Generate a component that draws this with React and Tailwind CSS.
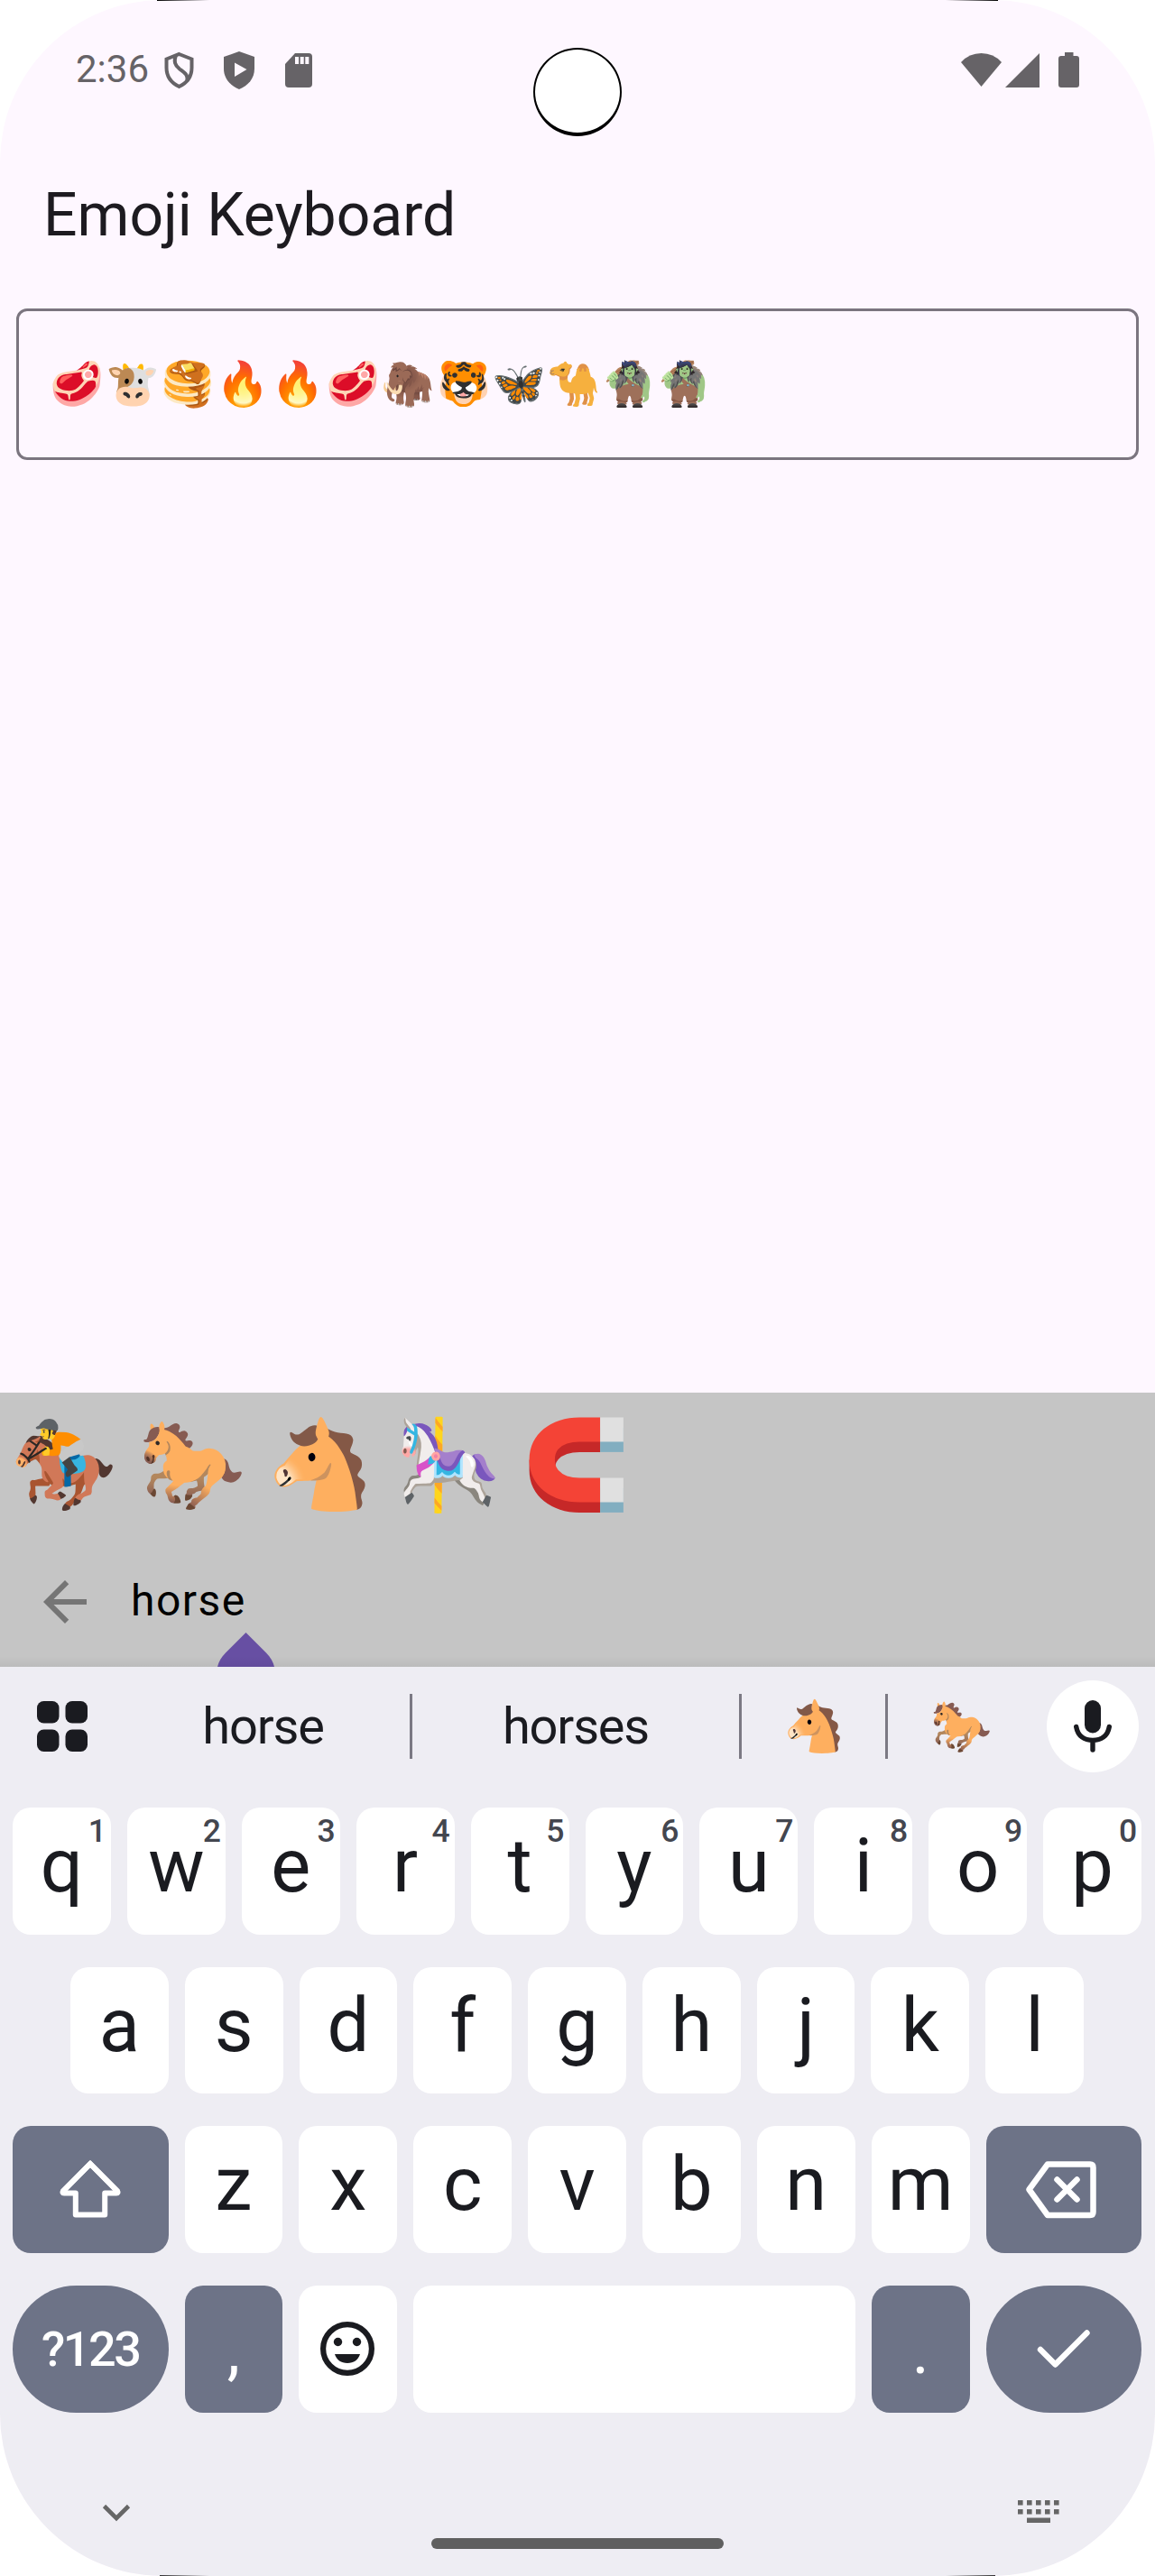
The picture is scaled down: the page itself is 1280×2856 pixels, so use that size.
const textEmojis = ['🥩', '🐮', '🥞', '🔥', '🔥', '🥩', '🦣', '🐯', '🦋', '🐪', '🧌', '🧌'];
const results = ['🏇', '🐎', '🐴', '🎠', '🧲'];
const font = "font-[Roboto,'Noto_Color_Emoji',sans-serif]";

function StatusBar() {
  return (
    <div className="h-[170px] flex items-start text-[#666367]">
      <span className="ml-[84px] mt-[53px] w-[98px] text-[42px] leading-[48px]">2:36</span>
      <svg className="mt-[57px] h-[42px] w-[33px]" viewBox="0 0 33 42" fill="none" stroke="currentColor" strokeWidth="4">
        <path d="M16.500 3 L30.500 8.500 V18 C30.500 28 25 35 16.500 39 C8 35 2.500 28 2.500 18 V8.500 Z" />
        <path d="M13 4 C10.500 11 11.500 15 17 19.500 C23 24 26.500 26 25.500 33" />
      </svg>
      <svg className="ml-[33px] mt-[57px] h-[42px] w-[34px]" viewBox="0 0 34 42">
        <path fill="currentColor" d="M17 0 L34 6 V19 C34 30 27 38 17 42 C7 38 0 30 0 19 V6 Z" />
        <path fill="#fef7ff" d="M12 12.500 L25.500 20 L12 28 Z" />
      </svg>
      <svg className="ml-[34px] mt-[59px] h-[38px] w-[30px]" viewBox="0 0 30 38">
        <path fill="currentColor" d="M11 0 H26 Q30 0 30 4 V34 Q30 38 26 38 H4 Q0 38 0 34 V12 Z" />
        <path fill="#fef7ff" d="M11 4 h4 v8 h-4z M16.700 4 h4 v8 h-4z M22.300 4 h4 v8 h-4z" />
      </svg>
      <div className="ml-[245px] mt-[53px] h-[98px] w-[98px] rounded-full border-[2.5px] border-b-4 border-black bg-white" />
      <svg className="ml-[376px] mt-[58px] h-[39px] w-[45px]" viewBox="0 0 45 39" fill="currentColor">
        <path d="M22.500 38 L0 11 Q9 1 22.500 1 T45 11 Z" />
      </svg>
      <svg className="ml-[4px] mt-[58px] h-[39px] w-[38px]" viewBox="0 0 38 39" fill="currentColor">
        <path d="M38 1 V39 H0 Z" />
      </svg>
      <svg className="ml-[21px] mt-[58px] h-[39px] w-[23px]" viewBox="0 0 23 39" fill="currentColor">
        <path d="M7 0 H16.500 V4 H20 Q23 4 23 7 V36 Q23 39 20 39 H3 Q0 39 0 36 V7 Q0 4 3 4 H7 Z" />
      </svg>
    </div>
  );
}

function Key({ label, hint }) {
  return (
    <div className="relative flex h-full flex-1 justify-center rounded-[20px] bg-white text-[83px] leading-[96px] text-[#1a1b20]">
      <span className="mt-[17px]">{label}</span>
      {hint && <span className="absolute right-[5px] top-[6px] text-[35.5px] font-medium leading-[40px] text-[#43464f]">{hint}</span>}
    </div>
  );
}

const darkKey = 'flex h-full items-center justify-center bg-[#6d7387] text-white';

function Keyboard() {
  return (
    <div className="h-[1008px] bg-[#eeedf3] text-[#1a1b20]">
      <div className="flex h-[132px] items-center">
        <svg className="ml-[41px] h-[56px] w-[56px]" viewBox="0 0 56 56" fill="currentColor">
          <rect width="24.500" height="24.500" rx="7.500" />
          <rect x="31.500" width="24.500" height="24.500" rx="7.500" />
          <rect y="31.500" width="24.500" height="24.500" rx="7.500" />
          <rect x="31.500" y="31.500" width="24.500" height="24.500" rx="7.500" />
        </svg>
        <span className="ml-[30px] w-[327px] pl-[2px] text-center text-[56px] leading-[64px] tracking-[-1.2px]">horse</span>
        <i className="h-[72px] w-[3px] bg-[#7b7983]" />
        <span className="w-[362px] text-center text-[56px] leading-[64px] tracking-[-1.2px]">horses</span>
        <i className="h-[72px] w-[3px] bg-[#7b7983]" />
        <span className="flex w-[159px] justify-center pl-[3px] text-[55px] leading-[64px]">🐴</span>
        <i className="h-[72px] w-[3px] bg-[#7b7983]" />
        <span className="flex w-[164px] justify-center text-[55px] leading-[64px]">🐎</span>
        <div className="ml-[12px] flex h-[102px] w-[102px] items-center justify-center rounded-full bg-white">
          <svg className="h-[58px] w-[42px]" viewBox="0 0 42 58">
            <rect x="12" y="0" width="18" height="36.500" rx="9" fill="currentColor" />
            <path d="M2.700 29.500 C4.500 40 12 44.500 21 44.500 C30 44.500 37.500 40 39.300 29.500 M21 45 V55" fill="none" stroke="currentColor" strokeWidth="5.400" strokeLinecap="round" />
          </svg>
        </div>
      </div>
      <div className="mt-[24px] flex flex-col gap-[36px] pl-[14px] pr-[15px]">
        <div className="flex h-[140.7px] gap-[18px]">
          {[...'qwertyuiop'].map((k, i) => <Key key={k} label={k} hint={String((i + 1) % 10)} />)}
        </div>
        <div className="flex h-[140.7px] gap-[18px] px-[64px]">
          {[...'asdfghjkl'].map((k) => <Key key={k} label={k} />)}
        </div>
        <div className="flex h-[140.7px] gap-[18px]">
          <div className={`${darkKey} w-[172.5px] rounded-[20px]`}>
            <svg className="h-[72px] w-[72px]" viewBox="0 0 72 72" fill="none" stroke="currentColor" strokeWidth="6">
              <path strokeLinejoin="miter" d="M5.500 38 L36 7 L66.500 38" />
              <path strokeLinejoin="round" d="M36 7 L66 37 Q67.500 39.500 65 39.500 H52.200 V63.500 H19.800 V39.500 H7 Q4.500 39.500 6 37 Z" />
            </svg>
          </div>
          {[...'zxcvbnm'].map((k) => <Key key={k} label={k} />)}
          <div className={`${darkKey} w-[172.5px] rounded-[20px]`}>
            <svg className="mr-[5px] h-[66px] w-[78px]" viewBox="0 0 78 66" fill="none" stroke="currentColor" strokeWidth="6.500" strokeLinejoin="round" strokeLinecap="round">
              <path d="M3.500 32.500 L24 4.500 H71 Q74.500 4.500 74.500 8 V57.500 Q74.500 61 71 61 H24 Z" />
              <path d="M34.500 21.500 L56.500 43.500 M56.500 21.500 L34.500 43.500" />
            </svg>
          </div>
        </div>
        <div className="flex h-[140.7px] gap-[18px]">
          <div className={`${darkKey} w-[172.5px] rounded-full text-[54px] font-medium leading-[64px] tracking-[-2.5px]`}><span className="mt-px">?123</span></div>
          <div className={`${darkKey} w-[108.5px] rounded-[20px] text-[72px] leading-[84px]`}><span className="mt-[6px]">,</span></div>
          <div className="flex w-[108.5px] items-center justify-center rounded-[20px] bg-white">
            <svg className="h-[60px] w-[60px]" viewBox="0 0 60 60" fill="currentColor">
              <circle cx="30" cy="30" r="26.900" fill="none" stroke="currentColor" strokeWidth="6.200" />
              <circle cx="19.500" cy="22.500" r="4.700" />
              <circle cx="40.500" cy="22.500" r="4.700" />
              <path d="M16 36 H44 C42 42.500 37 46 30 46 S18 42.500 16 36 Z" />
            </svg>
          </div>
          <div className="flex-1 rounded-[20px] bg-white" />
          <div className={`${darkKey} w-[108.5px] rounded-[20px] text-[72px] leading-[84px]`}><span className="mt-[6px]">.</span></div>
          <div className={`${darkKey} w-[172.5px] rounded-full`}>
            <svg className="h-[60px] w-[60px]" viewBox="0 0 60 60" fill="none" stroke="currentColor" strokeWidth="6.400" strokeLinecap="round" strokeLinejoin="round">
              <path d="M4 31 L20.500 47.500 L55.500 12.500" />
            </svg>
          </div>
        </div>
      </div>
      <div className="mt-[96px] flex h-[30px] justify-between pl-[113px] pr-[106px] text-[#666666]">
        <svg className="mt-[5px] h-[22px] w-[32px]" viewBox="0 0 32 22" fill="none" stroke="currentColor" strokeWidth="4.600">
          <path d="M2.500 2.500 L16 16 L29.500 2.500" />
        </svg>
        <svg className="h-[27px] w-[46px]" viewBox="0 0 46 27" fill="currentColor">
          {[0, 10, 20, 30, 40].map((x) => <path key={x} d={`M${x} 1h5.600v5.600h-5.600z M${x} 11h5.600v5.600h-5.600z`} />)}
          <path d="M10 20.500h26v5.500h-26z" />
        </svg>
      </div>
      <div className="mx-auto mt-[13px] h-[12px] w-[324px] rounded-full bg-[#5f5f5f]" />
    </div>
  );
}

export default function App() {
  return (
    <div className="relative h-[2856px] w-[1280px] bg-white">
      <div className={`${font} h-full overflow-hidden rounded-[180px] bg-[#fef7ff]`}>
        <StatusBar />
        <h1 className="ml-[48px] h-[172px] pt-[30px] text-[66px] leading-[78px] text-[#1d1b20]">Emoji Keyboard</h1>
        <div className="mx-[18px] flex h-[168px] items-center rounded-[12px] border-[3px] border-[#7b757f] pl-[34px]">
          {textEmojis.map((e, i) => (
            <span key={i} className="flex w-[61.2px] justify-center text-[48px] leading-[60px]">{e}</span>
          ))}
        </div>
        <div className="mt-[1034px] h-[304px] bg-[#c5c5c5]">
          <div className="flex h-[160px]">
            {results.map((e) => (
              <span key={e} className="flex w-[142px] justify-center text-[96px] leading-[160px]">{e}</span>
            ))}
          </div>
          <div className="relative flex h-[144px] items-start overflow-hidden">
            <svg className="ml-[36px] mt-[36px] h-[72px] w-[72px] text-[#757575]" viewBox="0 0 24 24" fill="currentColor">
              <path d="M20 11H7.830l5.590-5.590L12 4l-8 8 8 8 1.410-1.410L7.830 13H20v-2z" />
            </svg>
            <span className="ml-[37px] mt-[43px] text-[48px] leading-[56px] tracking-[1.5px] text-black">horse</span>
            <svg className="absolute left-[241px] top-[106px] h-[38px] w-[63px]" viewBox="0 0 63 38" fill="#674fa3">
              <path d="M31.500 0 L54 22.500 Q61 29.500 63 38 H0 Q2 29.500 9 22.500 Z" />
            </svg>
            <div className="absolute inset-x-0 bottom-0 h-[12px] bg-linear-to-t from-black/5 to-transparent" />
          </div>
        </div>
        <Keyboard />
      </div>
      <i className="absolute left-[174px] top-0 h-px w-[58px] bg-linear-to-r from-black to-transparent" />
      <i className="absolute right-[174px] top-0 h-px w-[58px] bg-linear-to-l from-black to-transparent" />
      <i className="absolute bottom-0 left-[177px] h-px w-[55px] bg-linear-to-r from-black/80 to-transparent" />
      <i className="absolute bottom-0 right-[177px] h-px w-[55px] bg-linear-to-l from-black/80 to-transparent" />
    </div>
  );
}
